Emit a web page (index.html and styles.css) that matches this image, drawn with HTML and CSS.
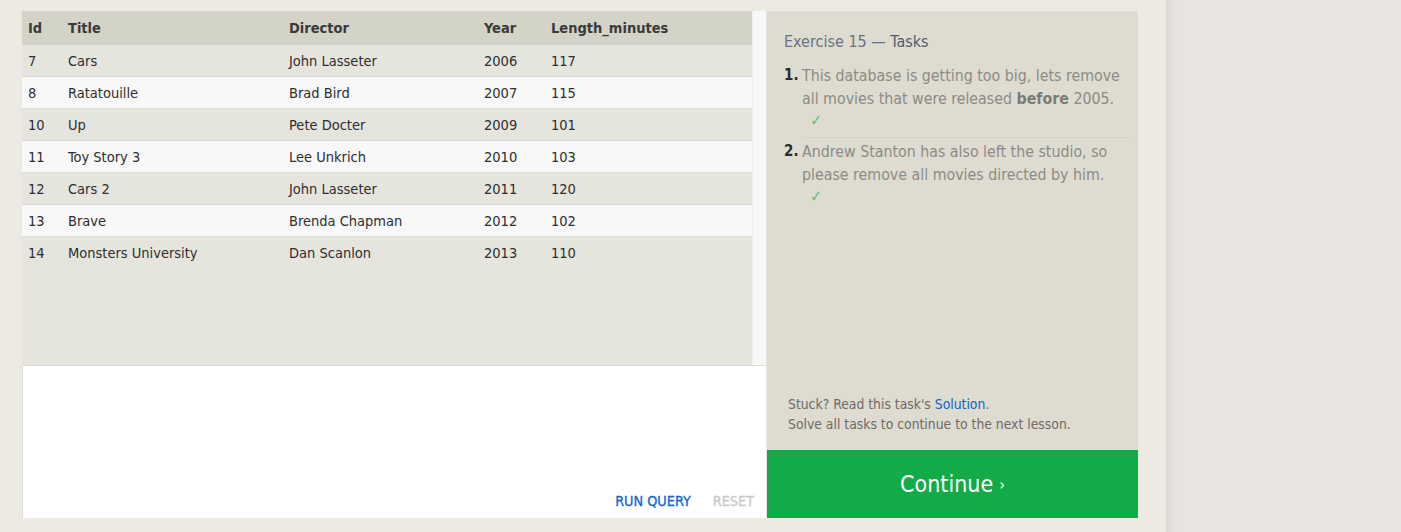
FILE: index.html
```html
<!DOCTYPE html>
<html>
<head>
<meta charset="utf-8">
<link rel="stylesheet" href="styles.css">
</head>
<body>
<div class="page">
  <div class="main">
    <div class="lesson">
      <div class="work">
        <div class="results">
          <div class="table-wrap">
            <table class="grid">
              <thead>
                <tr><th class="c-id">Id</th><th class="c-title">Title</th><th class="c-dir">Director</th><th class="c-year">Year</th><th class="c-len">Length_minutes</th></tr>
              </thead>
              <tbody>
                <tr><td>7</td><td>Cars</td><td>John Lasseter</td><td>2006</td><td>117</td></tr>
                <tr><td>8</td><td>Ratatouille</td><td>Brad Bird</td><td>2007</td><td>115</td></tr>
                <tr><td>10</td><td>Up</td><td>Pete Docter</td><td>2009</td><td>101</td></tr>
                <tr><td>11</td><td>Toy Story 3</td><td>Lee Unkrich</td><td>2010</td><td>103</td></tr>
                <tr><td>12</td><td>Cars 2</td><td>John Lasseter</td><td>2011</td><td>120</td></tr>
                <tr><td>13</td><td>Brave</td><td>Brenda Chapman</td><td>2012</td><td>102</td></tr>
                <tr><td>14</td><td>Monsters University</td><td>Dan Scanlon</td><td>2013</td><td>110</td></tr>
              </tbody>
            </table>
          </div>
          <div class="scrollbar"></div>
        </div>
        <div class="editor">
          <div class="editor-actions">
            <span class="run">RUN QUERY</span>
            <span class="reset">RESET</span>
          </div>
        </div>
      </div>
      <div class="tasks">
        <div class="tasks-body">
          <h2 class="tasks-title">Exercise 15 — <span class="strong">Tasks</span></h2>
          <ol class="task-list">
            <li class="task"><span class="num">1.</span><div class="task-text">This database is getting too big, lets remove all movies that were released <b>before</b> 2005.<div class="check">✓</div></div></li>
            <li class="task"><span class="num">2.</span><div class="task-text">Andrew Stanton has also left the studio, so please remove all movies directed by him.<div class="check">✓</div></div></li>
          </ol>
        </div>
        <div class="hint">
          <div>Stuck? Read this task's <span class="link">Solution</span>.</div>
          <div>Solve all tasks to continue to the next lesson.</div>
        </div>
        <div class="continue">Continue <span class="chev">›</span></div>
      </div>
    </div>
  </div>
  <div class="sidebar"></div>
</div>
</body>
</html>
```

FILE: styles.css
```css
html, body {
  margin: 0;
  padding: 0;
}
body {
  background: #ede9e3;
  font-family: "DejaVu Sans Condensed", "DejaVu Sans", sans-serif;
  font-stretch: condensed;
  color: #333;
}
.page {
  display: flex;
  height: 532px;
}
.main {
  width: 1166px;
  box-sizing: border-box;
  padding: 11px 28px 0 22px;
}
.sidebar {
  flex: 1;
  background: linear-gradient(to right, #dcd8d4 0px, #e6e2de 10px, #e8e4e1 18px);
}
.lesson {
  display: flex;
  height: 507px;
}
.work {
  width: 744px;
  display: flex;
  flex-direction: column;
}
.results {
  display: flex;
  height: 354px;
}
.table-wrap {
  width: 730px;
  background: #e6e5dd;
}
.scrollbar {
  width: 13px;
  background: #f8f8f8;
  border-left: 1px solid #eeeeec;
}
.grid {
  width: 100%;
  border-collapse: collapse;
  font-size: 14.5px;
}
.grid th {
  background: #d4d3c7;
  height: 34px;
  text-align: left;
  font-weight: bold;
  color: #3a3a3a;
  padding: 0 0 0 6px;
  font-size: 14.5px;
}
.grid td {
  height: 31px;
  padding: 0 0 0 6px;
  color: #2e2e2e;
  border-bottom: 1px solid #dcdcd8;
}
.grid tbody tr:nth-child(odd) td { background: #e6e5dd; }
.grid tbody tr:nth-child(even) td { background: #f8f8f8; }
.grid tbody tr:last-child td { border-bottom: none; }
.grid .c-id { width: 34px; }
.grid .c-title { width: 215px; }
.grid .c-dir { width: 189px; }
.grid .c-year { width: 61px; }
.editor {
  flex: 1;
  background: #fff;
  border-top: 1px solid #dedbd2;
  border-left: 1px solid #e2dfd8;
  display: flex;
  align-items: flex-end;
  justify-content: flex-end;
}
.editor-actions {
  display: flex;
  gap: 22px;
  padding: 0 12px 9px 0;
  font-size: 14.3px;
  font-weight: normal;
  -webkit-text-stroke: 0.3px;
}
.run { color: #1565d0; }
.reset { color: #c9c9c9; }
.tasks {
  width: 372px;
  background: #dedbd0;
  border-left: 1px solid #e8e6df;
  display: flex;
  flex-direction: column;
}
.tasks-body {
  flex: 1;
  padding: 21px 8px 0 17px;
}
.tasks-title {
  margin: 0 0 13px 0;
  font-size: 16px;
  font-weight: normal;
  color: #6b7183;
}
.tasks-title .strong { color: #525b6d; }
.task-list {
  list-style: none;
  margin: 0;
  padding: 0;
}
.task {
  display: flex;
  font-size: 15.8px;
  line-height: 23px;
  color: #8c8b85;
}
.task + .task {
  margin-top: 2px;
}
.task:first-child .task-text {
  border-bottom: 1px solid #d3d0c5;
  padding-bottom: 6px;
}
.num {
  width: 18px;
  flex: none;
  font-weight: bold;
  font-size: 15px;
  color: #2b2b2b;
}
.task-text { flex: 1; }
.task-text b { color: #7c7b76; font-weight: 600; }
.check {
  color: #5cc17a;
  font-size: 16px;
  line-height: 21px;
  padding-left: 8px;
}
.hint {
  padding: 0 0 16px 21px;
  font-size: 13.8px;
  line-height: 20px;
  color: #6e6a66;
}
.link { color: #0d5fd0; }
.continue {
  height: 68px;
  background: #12ab48;
  color: #fff;
  font-size: 23px;
  display: flex;
  align-items: center;
  justify-content: center;
}
.chev {
  font-size: 16px;
  margin-left: 6px;
}
```
